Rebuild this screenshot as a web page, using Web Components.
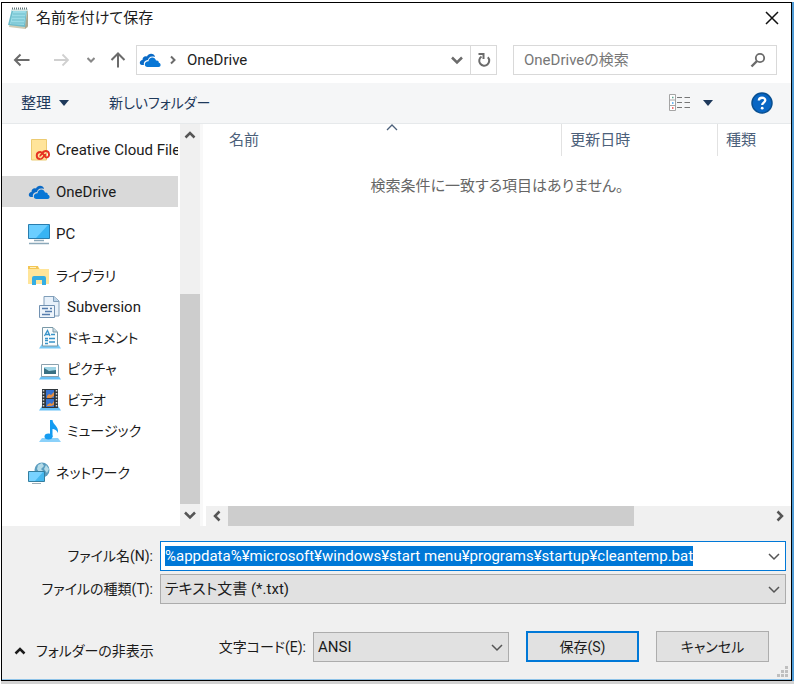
<!DOCTYPE html>
<html lang="ja">
<head>
<meta charset="utf-8">
<title>名前を付けて保存</title>
<style>
html, body { height: 100%; }
body { margin: 0; background: #d2d2d2; font: 15px/20px Roboto, "Noto Sans CJK JP", sans-serif; font-feature-settings: "palt"; color: #1b1b1b; }
</style>
</head>
<body>
<save-dialog></save-dialog>
<script>
const ICONS = {
  notepad: ['0 0 21 22', '<path d="M5 2 20 2 20 20 17 22 1 20Z" fill="#cfcbb4"/><path d="M20 3V19L17 22V19Z" fill="#a9a68f"/><path d="M4 2 19 2 17 20 0 18Z" fill="#6dbccb"/><path d="M5 4 18 4 16 18 2 17Z" fill="#9adbe6"/><path d="M5 7H17M4 10H17M4 13H16M3 16H16" stroke="#6ebdcb"/><path d="M4 2H20V4H4Z" fill="#d7e7e5"/><path d="M4 1.500H20" stroke="#65777b" stroke-width="2" stroke-dasharray="1 1"/>'],
  left: ['0 0 18 18', '<path d="M16.500 9H2M7.500 3.500 2 9 7.500 14.500" fill="none" stroke="currentColor" stroke-width="2"/>'],
  right: ['0 0 18 18', '<path d="M2 9H16M10.500 3.500 16 9 10.500 14.500" fill="none" stroke="currentColor" stroke-width="1.800"/>'],
  up: ['0 0 18 18', '<path d="M9 16.500V2.500M2.500 9 9 2.500 15.500 9" fill="none" stroke="currentColor" stroke-width="2"/>'],
  down: ['0 0 12 12', '<path d="M1 4 6 9 11 4" fill="none" stroke="currentColor" stroke-width="1.500"/>'],
  bolddown: ['0 0 12 12', '<path d="M1 3.500 6 8.500 11 3.500" fill="none" stroke="currentColor" stroke-width="2.500"/>'],
  boldup: ['0 0 12 12', '<path d="M1.500 8.500 6 4 10.500 8.500" fill="none" stroke="currentColor" stroke-width="2.500"/>'],
  boldleft: ['0 0 12 12', '<path d="M8.500 1.500 4 6 8.500 10.500" fill="none" stroke="currentColor" stroke-width="2.500"/>'],
  boldright: ['0 0 12 12', '<path d="M3.500 1.500 8 6 3.500 10.500" fill="none" stroke="currentColor" stroke-width="2.500"/>'],
  thinup: ['0 0 12 8', '<path d="M1 6 6 1 11 6" fill="none" stroke="currentColor" stroke-width="1.300"/>'],
  caret: ['0 0 10 6', '<path d="M0 0H10L5 6Z" fill="currentColor"/>'],
  refresh: ['0 0 16 16', '<path d="M11.800 5.200A5 5 0 1 1 5.500 4.500" fill="none" stroke="currentColor" stroke-width="2"/><path d="M2.500 2H7.500V7" fill="none" stroke="currentColor" stroke-width="2"/>'],
  search: ['0 0 16 16', '<circle cx="10" cy="6" r="4.200" fill="none" stroke="currentColor" stroke-width="1.800"/><path d="M7 9 1.500 14.500" stroke="currentColor" stroke-width="2.400"/>'],
  close: ['0 0 14 14', '<path d="M1 1 13 13M13 1 1 13" stroke="currentColor" stroke-width="1.500"/>'],
  view: ['0 0 22 18', '<path d="M.5 .5H6.500V16.500H.5ZM.5 6H6.500M.5 11.500H6.500" fill="#fff" stroke="#a5a5a5"/><path d="M3 3.500H4.500" stroke="#5aa28f" stroke-width="1.500"/><path d="M3 9H4.500" stroke="#3d9ff0" stroke-width="1.500"/><path d="M3 14H4.500" stroke="#e44" stroke-width="1.500"/><path d="M8 3.500H13M15.500 3.500H21M8 8.500H13M15.500 8.500H21M8 13.500H13M15.500 13.500H21" stroke="#777"/>'],
  help: ['0 0 22 22', '<circle cx="11" cy="11" r="10" fill="#0866c4" stroke="#084f91" stroke-width="1.500"/><path d="M7.800 8.500C8 4.800 14.300 4.900 14.300 8.300 14.300 10.500 11.200 10.700 11.200 13" fill="none" stroke="#fff" stroke-width="2.300"/><circle cx="11.200" cy="16.200" r="1.400" fill="#fff"/>'],
  cloud: ['0 0 22 22', '<path d="M5 16H3C0 16 0 11.500 3.500 11 3.200 7.500 6.500 6.500 8 7.500 9.500 3.500 15.500 4 16 8 11 6.500 9.500 9 9 11 5 11.500 4.500 14 5 16Z" fill="#0a6ac6"/><path d="M8.500 18C4.800 18 4.800 12.500 9.500 12.300 10 7.500 16 7.500 17 11.500 20 11 20 13.500 19.700 13.800 22.500 14.500 22 18 19.500 18Z" fill="#0877d6"/>'],
  creative: ['0 0 22 22', '<path d="M3.500 .5H18.500V21H3.500Z" fill="#ffe49a" stroke="#eccb72"/><path d="M12.500 20C7.500 20 7.500 13 12.500 13 15.500 13 16.500 18.500 18.500 18.500 22 18.500 22 12 17.500 12 14 12 13.500 17 11.500 17" fill="none" stroke="#e63323" stroke-width="2"/><path d="M12.500 20C15.500 20 15.500 15.500 18 15.500" fill="none" stroke="#e63323" stroke-width="1.800"/>'],
  pc: ['0 0 22 22', '<path d="M.5 1.500H21.500V15.500H.5Z" fill="#38b4f4" stroke="#297dae"/><path d="M1 2H20L8 15H1Z" fill="#6bceff"/><path d="M6 17.500H16M1 20.500H21" stroke="#8ba8b9" stroke-width="1.500"/>'],
  library: ['0 0 22 22', '<path d="M0 2H10L12 4H21V19H0Z" fill="#ffe59a"/><path d="M0 1H10L11 4H0Z" fill="#f3c654"/><path d="M2 2.500H8" stroke="#fff0bd"/><path d="M4 20V13Q4 11 6 11H16Q18 11 18 13V20H14V15H8V20Z" fill="#35ade2"/>'],
  svn: ['0 0 22 22', '<path d="M5 .5H15L20 5V20H5Z" fill="#e8f1fa" stroke="#809eb9"/><path d="M14.500 1V5.500H20" fill="#bdd4e9" stroke="#809eb9"/><path d="M.5 9.500H15.500V21.500H.5Z" fill="#edf4fb" stroke="#7191b1"/><path d="M3 12.500H9M6 15.500H13M3 18.500H11M11 12.500H13" stroke="#557cad" stroke-width="1.500"/>'],
  doc: ['0 0 22 22', '<path d="M0 21.500 3 17H19L22 21.500Z" fill="#77c8f5"/><path d="M3.500 .5H14L18.500 5V19H3.500Z" fill="#f9fcfd" stroke="#7a99a7"/><path d="M14 1V5H18" fill="#c8dce7" stroke="#7a99a7"/><path d="M5.500 9 8.500 3.500 11 9M7 7.500H10M12 7.500H16M6 11.500H9M10 11.500H16M6 13.500H9M10 15H16M6 16.500H9" fill="none" stroke="#3793c9" stroke-width="1.300"/>'],
  picture: ['0 0 22 22', '<path d="M0 21.500 3 17H19L22 21.500Z" fill="#67bff5"/><path d="M2.500 6.500H19.500V18.500H2.500Z" fill="#fff" stroke="#8ba1ae"/><path d="M5 9H17V16H5Z" fill="#9ed4e6"/><path d="M5 10 10 13 17 12V16H5Z" fill="#397083"/>'],
  video: ['0 0 22 22', '<path d="M0 21.500 3 17H19L22 21.500Z" fill="#67bff5"/><path d="M3 0H19V19H3Z" fill="#30373c"/><path d="M4.500 1V19M17.500 1V19" stroke="#d2d6d8" stroke-width="1.500" stroke-dasharray="1.500 1.500"/><path d="M7 1H15V9H7ZM7 10H15V18H7Z" fill="#3673d1"/><path d="M8 7 10 5 12 6 15 3V7L12 9H8ZM8 16 11 14 13 15 15 12V16L12 17H8Z" fill="#e48e43"/>'],
  music: ['0 0 22 22', '<path d="M0 22 3 18H19L22 22Z" fill="#8bd1fa"/><ellipse cx="9.500" cy="16.500" rx="4" ry="3" fill="#159cf1"/><path d="M11 0H13.500C14 5 20 6 19 13 17.500 9 13.500 9 13.500 9V17H11Z" fill="#159cf1"/>'],
  network: ['0 0 22 22', '<circle cx="14" cy="8" r="7.500" fill="#5b9dbf"/><path d="M10 3 14 1 16 4 13 7 15 9 12 12 9 7ZM18 3 21 7 19 11 16 7Z" fill="#b4dbe8"/><path d="M.5 9.500H16.500V19.500H.5Z" fill="#45b8ef" stroke="#357e9f"/><path d="M1 10H15L7 19H1Z" fill="#78d2ff"/><path d="M4 21.500H13" stroke="#9daeb7"/>']
};

customElements.define('ui-icon', class extends HTMLElement {
  connectedCallback() {
    const [box, art] = ICONS[this.getAttribute('name')];
    const [, , w, h] = box.split(' ');
    this.attachShadow({ mode: 'open' }).innerHTML =
      `<style>:host{display:inline-flex;flex:none}svg{display:block}</style><svg width="${w}" height="${h}" viewBox="${box}" aria-hidden="true">${art}</svg>`;
  }
});

customElements.define('title-bar', class extends HTMLElement {
  connectedCallback() {
    this.attachShadow({ mode: 'open' }).innerHTML = `
<style>
:host{display:flex;align-items:center;gap:7px;height:29px;padding:0 12px 0 6px}
span{flex:1}
button{border:0;background:none;padding:0;display:flex;color:#111}
</style>
<ui-icon name="notepad"></ui-icon><span><slot></slot></span>
<button aria-label="閉じる"><ui-icon name="close"></ui-icon></button>`;
  }
});

customElements.define('address-bar', class extends HTMLElement {
  connectedCallback() {
    this.attachShadow({ mode: 'open' }).innerHTML = `
<style>
:host{display:grid;grid-template-columns:123px 369fr 272fr;align-items:center;height:30px;padding:13px 14px 8px 11px;color:#6b6b6b}
button{border:0;background:none;padding:0;display:flex;align-items:center;justify-content:center;color:inherit;font:inherit;font-feature-settings:inherit}
nav{display:flex;align-items:center}
nav button{width:18px}
nav button:nth-child(2){margin-left:21px;color:#d0d0d0}
nav button:nth-child(3){margin-left:12px;color:#888}
nav button:nth-child(4){margin-left:9px}
.path{box-sizing:border-box;height:30px;border:1px solid #d9d9d9;display:flex;align-items:center;padding-left:2px;margin-right:8px}
.path .crumb{color:#222}
.path .sep{margin:0 10px 0 8px}
.path .drop{margin-left:auto;width:26px;height:100%}
.path .ref{width:26px;height:100%;border-left:1px solid #d9d9d9}
.search{box-sizing:border-box;height:30px;margin-left:8px;border:1px solid #d9d9d9;display:flex;align-items:center;padding:0 10px}
input{flex:1;min-width:0;border:0;padding:0;font:inherit;font-feature-settings:inherit;background:none;outline:0}
input::placeholder{color:#777;opacity:1}
</style>
<nav>
<button aria-label="戻る"><ui-icon name="left"></ui-icon></button>
<button aria-label="進む"><ui-icon name="right"></ui-icon></button>
<button aria-label="履歴"><svg width="8" height="8" viewBox="0 0 8 8"><path d="M.5 2 4 5.500 7.500 2" fill="none" stroke="currentColor" stroke-width="2"/></svg></button>
<button aria-label="上へ"><ui-icon name="up"></ui-icon></button>
</nav>
<div class="path"><ui-icon name="cloud"></ui-icon>
<svg class="sep" width="8" height="10" viewBox="0 0 8 10"><path d="M2 1.500 5.500 5 2 8.500" fill="none" stroke="currentColor" stroke-width="2"/></svg>
<button class="crumb">OneDrive</button>
<button class="drop" aria-label="候補"><ui-icon name="bolddown"></ui-icon></button>
<button class="ref" aria-label="更新"><ui-icon name="refresh"></ui-icon></button></div>
<div class="search"><input aria-label="検索" placeholder="OneDriveの検索"><ui-icon name="search"></ui-icon></div>`;
  }
});

customElements.define('tool-bar', class extends HTMLElement {
  connectedCallback() {
    this.attachShadow({ mode: 'open' }).innerHTML = `
<style>
:host{display:flex;align-items:center;height:40px;padding:0 18px 0 19px;background:#f5f6f7;border-bottom:1px solid #e6e9eb}
button{border:0;background:none;padding:0;display:flex;align-items:center;gap:8px;color:#1e395b;font:inherit;font-feature-settings:inherit}
.new{margin-left:40px;font-size:14px}
.view{margin-left:auto;gap:12px}
.help{margin-left:38px}
</style>
<button>整理<ui-icon name="caret"></ui-icon></button>
<button class="new">新しいフォルダー</button>
<button class="view" aria-label="表示方法"><ui-icon name="view"></ui-icon><ui-icon name="caret"></ui-icon></button>
<button class="help" aria-label="ヘルプ"><ui-icon name="help"></ui-icon></button>`;
  }
});

customElements.define('tree-item', class extends HTMLElement {
  connectedCallback() {
    this.attachShadow({ mode: 'open' }).innerHTML = `
<style>
:host{display:block;padding-top:11px}
:host(:first-child){padding-top:10px}
:host([child]){padding:0}
:host([kana]){font-size:14px}
a{display:flex;align-items:center;gap:6px;height:31px;padding-left:26px;color:inherit;text-decoration:none;white-space:nowrap;overflow:hidden}
:host([child]) a{padding-left:37px}
:host([selected]) a{background:#d9d9d9}
</style>
<a href="#"><ui-icon name="${this.getAttribute('icon')}"></ui-icon><slot></slot></a>`;
  }
});

customElements.define('scroll-bar', class extends HTMLElement {
  connectedCallback() {
    const v = this.hasAttribute('vertical');
    this.attachShadow({ mode: 'open' }).innerHTML = `
<style>
:host{display:flex;background:#f0f0f0;color:#555;flex:none;${v ? 'flex-direction:column;width:20px' : 'height:20px'}}
button{border:0;background:none;padding:0;width:${v ? 20 : 22}px;height:${v ? 22 : 20}px;display:flex;align-items:center;justify-content:center;color:inherit;flex:none}
.a{flex:${v ? 148 : 0}}.t{flex:${v ? 210 : 405};background:#cdcdcd}.b{flex:${v ? 0 : 135}}
</style>
<button aria-label="前へ"><ui-icon name="${v ? 'boldup' : 'boldleft'}"></ui-icon></button>
<div class="a"></div><div class="t"></div><div class="b"></div>
<button aria-label="次へ"><ui-icon name="${v ? 'bolddown' : 'boldright'}"></ui-icon></button>`;
  }
});

customElements.define('nav-pane', class extends HTMLElement {
  connectedCallback() {
    this.attachShadow({ mode: 'open' }).innerHTML = `
<style>
:host{display:flex;flex:none;width:201px;border-right:3px solid #f8f8f8;box-sizing:border-box}
nav{flex:1;min-width:0;padding:0 2px 20px 0}
</style>
<nav><slot></slot></nav><scroll-bar vertical></scroll-bar>`;
  }
});

customElements.define('file-list', class extends HTMLElement {
  connectedCallback() {
    this.attachShadow({ mode: 'open' }).innerHTML = `
<style>
:host{display:flex;flex-direction:column;flex:1;min-width:0}
table{width:100%;border-collapse:collapse;table-layout:fixed}
th{position:relative;font-weight:400;text-align:left;color:#4c607a;height:32px;padding:0 0 0 8px;border-right:1px solid #e2e2e2}
th:first-child{width:61%;padding-left:26px;box-sizing:border-box}
th:nth-child(2){width:26.5%;box-sizing:border-box}
th:last-child{border:0}
th ui-icon{position:absolute;left:51%;top:0}
td{text-align:center;color:#666;padding:20px 0 0}
scroll-bar{margin:auto 0 0 3px}
</style>
<table><thead><tr><th>名前<ui-icon name="thinup"></ui-icon></th><th>更新日時</th><th>種類</th></tr></thead>
<tbody><tr><td colspan="3">検索条件に一致する項目はありません。</td></tr></tbody></table>
<scroll-bar></scroll-bar>`;
  }
});

customElements.define('drop-field', class extends HTMLElement {
  connectedCallback() {
    const value = this.getAttribute('value');
    const edit = this.hasAttribute('editable');
    this.attachShadow({ mode: 'open' }).innerHTML = `
<style>
:host{display:flex;align-items:center;gap:7px}
label{width:var(--label,151px);text-align:right;white-space:nowrap;flex:none;font-size:14px}
.box{flex:1;display:grid;align-items:center;box-sizing:border-box;height:30px;border:1px solid ${edit ? '#0078d7' : '#acacac'};background:${edit ? '#fff' : '#e1e1e1'}}
select,input{grid-area:1/1;width:100%;min-width:0;border:0;margin:0;padding:0 30px 0 4px;background:none;font:inherit;font-feature-settings:inherit;color:inherit;outline:0;appearance:none;box-sizing:border-box;height:20px}
input::selection{background:#0078d7;color:#fff}
ui-icon{grid-area:1/1;justify-self:end;margin-right:5px;color:#555;pointer-events:none}
</style>
<label for="f"><slot></slot></label>
<div class="box">${edit ? `<input id="f" value="${value}">` : `<select id="f"><option>${value}</option></select>`}<ui-icon name="down"></ui-icon></div>`;
    if (edit) {
      const field = this.shadowRoot.querySelector('input');
      field.focus();
      field.select();
    }
  }
});

customElements.define('push-button', class extends HTMLElement {
  connectedCallback() {
    this.attachShadow({ mode: 'open' }).innerHTML = `
<style>
:host{display:block;width:113px}
button{width:100%;height:31px;padding:0;border:1px solid #adadad;background:#e1e1e1;font:inherit;font-size:14px;font-feature-settings:inherit;color:inherit}
:host([primary]) button{border:2px solid #0078d7}
</style><button><slot></slot></button>`;
  }
});

customElements.define('dialog-footer', class extends HTMLElement {
  connectedCallback() {
    this.attachShadow({ mode: 'open' }).innerHTML = `
<style>
:host{display:flex;flex-direction:column;gap:3px;position:relative;background:#f0f0f0;padding:15px 5px 17px 0;border-bottom:1px solid #8fc3e8}
.row{display:flex;align-items:center;margin-top:24px;padding-right:17px}
.toggle{display:flex;align-items:center;gap:10px;border:0;background:none;padding:8px 0 0 12px;font:inherit;font-size:14px;font-feature-settings:inherit;color:inherit}
.enc{--label:90px;width:293px;margin-left:auto}
push-button{margin-left:17px}
.grip{position:absolute;right:3px;bottom:2px}
</style>
<drop-field editable value="%appdata%¥microsoft¥windows¥start menu¥programs¥startup¥cleantemp.bat">ファイル名(N):</drop-field>
<drop-field value="テキスト文書 (*.txt)">ファイルの種類(T):</drop-field>
<div class="row">
<button class="toggle"><ui-icon name="boldup"></ui-icon>フォルダーの非表示</button>
<drop-field class="enc" value="ANSI">文字コード(E):</drop-field>
<push-button primary>保存(S)</push-button><push-button>キャンセル</push-button>
</div>
<svg class="grip" width="11" height="11" viewBox="0 0 11 11"><path d="M8 0h3v3h-3zM4 4h3v3h-3zM8 4h3v3h-3zM0 8h3v3h-3zM4 8h3v3h-3zM8 8h3v3h-3z" fill="#bfbfbf"/></svg>`;
  }
});

customElements.define('save-dialog', class extends HTMLElement {
  connectedCallback() {
    this.attachShadow({ mode: 'open' }).innerHTML = `
<style>
:host{display:flex;box-sizing:border-box;min-height:100vh;padding:2px 0 3px 1px;background:linear-gradient(#fff,#fff) top/100% 2px no-repeat,linear-gradient(90deg,#fff 1px,transparent 1px) no-repeat,#d2d2d2}
.win{flex:1;min-width:0;display:flex;flex-direction:column;border:1px solid #000;box-sizing:border-box;background:#fff}
.side{width:2px;background:#4f9bd5}
main{flex:1;display:flex}
</style>
<div class="win">
<title-bar>名前を付けて保存</title-bar>
<address-bar></address-bar>
<tool-bar></tool-bar>
<main>
<nav-pane>
<tree-item icon="creative">Creative Cloud Files</tree-item>
<tree-item icon="cloud" selected>OneDrive</tree-item>
<tree-item icon="pc">PC</tree-item>
<tree-item icon="library" kana>ライブラリ</tree-item>
<tree-item icon="svn" child>Subversion</tree-item>
<tree-item icon="doc" child kana>ドキュメント</tree-item>
<tree-item icon="picture" child kana>ピクチャ</tree-item>
<tree-item icon="video" child kana>ビデオ</tree-item>
<tree-item icon="music" child kana>ミュージック</tree-item>
<tree-item icon="network" kana>ネットワーク</tree-item>
</nav-pane>
<file-list></file-list>
</main>
<dialog-footer></dialog-footer>
</div><div class="side"></div>`;
  }
});
</script>
</body>
</html>
